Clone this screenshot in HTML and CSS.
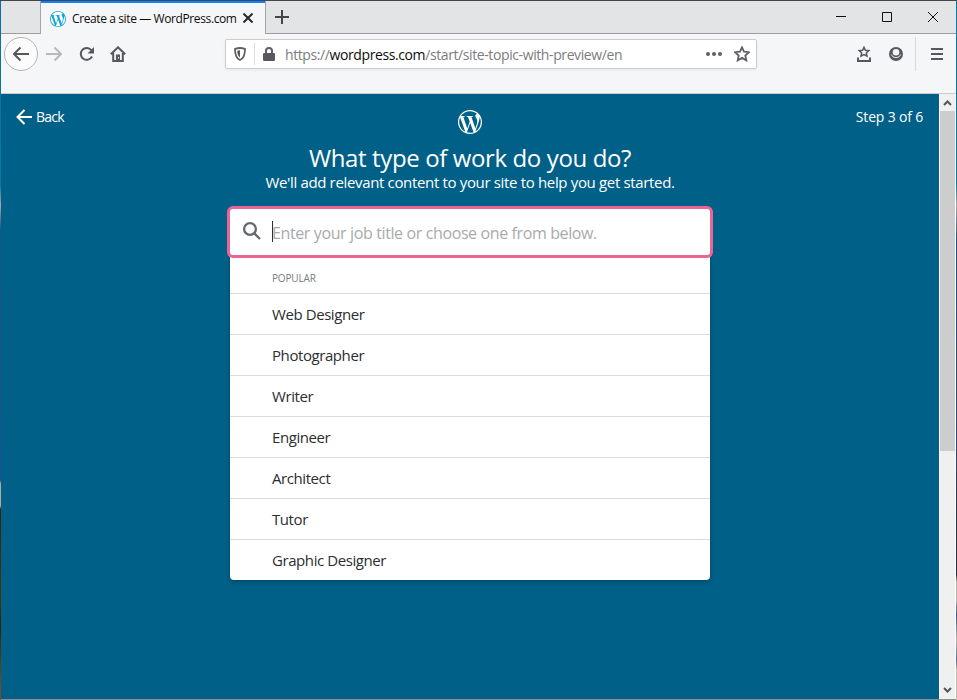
FILE: index.html
```html
<!DOCTYPE html>
<html lang="en">
<head>
<meta charset="utf-8">
<title>Create a site — WordPress.com</title>
<link rel="stylesheet" href="styles.css">
</head>
<body>
<svg class="defs" width="0" height="0">
  <symbol id="wp" viewBox="0 0 24 24"><path d="M21.469 6.825c.84 1.537 1.318 3.3 1.318 5.175 0 3.979-2.156 7.456-5.363 9.325l3.295-9.527c.615-1.54.82-2.771.82-3.864 0-.405-.026-.78-.07-1.11m-7.981.105c.647-.03 1.232-.105 1.232-.105.582-.075.514-.93-.067-.899 0 0-1.755.135-2.88.135-1.064 0-2.85-.15-2.85-.15-.585-.03-.661.855-.075.885 0 0 .54.061 1.125.09l1.68 4.605-2.37 7.08L5.354 6.9c.649-.03 1.234-.1 1.234-.1.585-.075.516-.93-.065-.896 0 0-1.746.138-2.874.138-.2 0-.438-.008-.69-.015C4.911 3.15 8.235 1.215 12 1.215c2.809 0 5.365 1.072 7.286 2.833-.046-.003-.091-.009-.141-.009-1.06 0-1.812.923-1.812 1.914 0 .89.513 1.643 1.06 2.531.411.72.89 1.643.89 2.977 0 .915-.354 1.994-.821 3.479l-1.075 3.585-3.9-11.61.001.014zM12 22.784c-1.059 0-2.081-.153-3.048-.437l3.237-9.406 3.315 9.087c.024.053.05.101.078.149-1.12.393-2.325.609-3.582.609M1.211 12c0-1.564.336-3.05.935-4.39L7.29 21.709C3.694 19.96 1.212 16.271 1.211 12M12 0C5.385 0 0 5.385 0 12s5.385 12 12 12 12-5.385 12-12S18.615 0 12 0"/></symbol>
</svg>
<div class="window">
  <div class="tabbar">
    <div class="tab">
      <svg class="favicon" width="16" height="16"><circle cx="8" cy="8" r="7.8" fill="#fff"/><use href="#wp" width="16" height="16"/></svg>
      <span class="tab-title">Create a site — WordPress.com</span>
      <svg class="tab-close" width="10" height="10" viewBox="0 0 10 10"><path d="M.5.5l9 9M9.500.5l-9 9"/></svg>
    </div>
    <svg class="plus" width="14" height="14" viewBox="0 0 14 14"><path d="M7 0v14M0 7h14"/></svg>
    <div class="caption">
      <svg width="10" height="10" viewBox="0 0 10 10"><path d="M0 4.500h10"/></svg>
      <svg width="10" height="10" viewBox="0 0 10 10"><path d="M.5.5h9v9h-9z"/></svg>
      <svg width="10" height="10" viewBox="0 0 10 10"><path d="M0 0l10 10M10 0L0 10"/></svg>
    </div>
  </div>
  <div class="toolbar">
    <div class="nav">
      <span class="back-circle"><svg width="16" height="16" viewBox="0 0 16 16"><path d="M16 8H1.500M7.500 1.500L1 8l6.500 6.500"/></svg></span>
      <svg class="forward" width="16" height="16" viewBox="0 0 16 16"><path d="M0 8h14.500M8.500 1.500L15 8l-6.500 6.500"/></svg>
      <svg class="reload" width="16" height="16" viewBox="0 0 16 16"><path d="M12.300 4.200A5.900 5.900 0 1 0 13 10.500"/><path class="solid" d="M15 1v6.500H8.500z"/></svg>
      <svg class="home" width="16" height="16" viewBox="0 0 16 16"><path d="M.8 8.300L8 1.300l7.200 7M3.200 7v8h9.600V7"/><path class="solid" fill-rule="evenodd" d="M6 8.500h4V15H6zM8 11v1.500h1V11z"/></svg>
    </div>
    <div class="urlbar">
      <svg class="shield" width="12" height="14" viewBox="0 0 12 14"><path d="M6 1c1.800 0 3.500.4 5 .9C11 7 10.300 11 6 13 1.700 11 1 7 1 1.900 2.500 1.400 4.200 1 6 1z"/><path class="solid" d="M6 3.300v7.200C4 9 3.300 7 3.200 3.800z"/></svg>
      <span class="sep"></span>
      <svg class="lock" width="12" height="14" viewBox="0 0 12 14"><path d="M3 7V4a3 3 0 0 1 6 0v3"/><rect class="solid" y="6" width="12" height="8" rx="1.200"/></svg>
      <span class="url">https://<b>wordpress.com</b>/start/site-topic-with-preview/en</span>
      <svg class="dots" width="16" height="4" viewBox="0 0 16 4"><circle cx="2" cy="2" r="2"/><circle cx="8" cy="2" r="2"/><circle cx="14" cy="2" r="2"/></svg>
      <svg class="star" width="16" height="16" viewBox="0 0 16 16"><path d="M8 1.300l2 4.400 4.900.5-3.600 3.300 1 4.900L8 11.900l-4.300 2.500 1-4.900L1.100 6.200 6 5.700z"/></svg>
    </div>
    <div class="tools">
      <svg width="16" height="16" viewBox="0 0 16 16"><path class="thin" d="M8 1.200l1.400 3 3.400.4-2.500 2.300.7 3.300L8 8.600l-3 1.600.7-3.300-2.500-2.300 3.400-.4z"/><path d="M2 11.500V15h12v-3.500"/></svg>
      <svg width="16" height="16" viewBox="0 0 16 16"><circle class="fill" cx="8" cy="8" r="7"/><circle class="face" cx="8" cy="6.300" r="3.300"/><path class="collar" d="M3.300 8.500Q4.300 11.700 8 11.700T12.700 8.500"/></svg>
      <span class="tool-sep"></span>
      <svg class="menu" width="14" height="14" viewBox="0 0 14 14"><path d="M1 2h12M1 7h12M1 12h12"/></svg>
    </div>
  </div>
  <div class="viewport">
    <main class="page">
      <header class="top">
        <a class="back"><svg width="16" height="16" viewBox="0 0 16 16"><path d="M16 8H2M8.500 1L1.500 8l7 7"/></svg><span>Back</span></a>
        <svg class="logo" width="24" height="24"><use href="#wp" width="24" height="24"/></svg>
        <span class="step">Step 3 of 6</span>
      </header>
      <h1>What type of work do you do?</h1>
      <p class="sub">We'll add relevant content to your site to help you get started.</p>
      <section class="picker">
        <div class="search">
          <svg width="20" height="20" viewBox="0 0 20 20"><circle cx="8" cy="8" r="5.900"/><path d="M12.300 12.300l5.700 5.700"/></svg>
          <span class="caret"></span><span class="placeholder">Enter your job title or choose one from below.</span>
        </div>
        <div class="list">
          <div class="label">POPULAR</div>
          <div class="item">Web Designer</div>
          <div class="item">Photographer</div>
          <div class="item">Writer</div>
          <div class="item">Engineer</div>
          <div class="item">Architect</div>
          <div class="item">Tutor</div>
          <div class="item">Graphic Designer</div>
        </div>
      </section>
    </main>
    <div class="scrollbar">
      <svg width="9" height="6" viewBox="0 0 9 6"><path d="M1 5l3.500-3.500L8 5"/></svg>
      <div class="thumb"></div>
      <svg class="down" width="9" height="6" viewBox="0 0 9 6"><path d="M1 1l3.500 3.500L8 1"/></svg>
    </div>
  </div>
</div>
</body>
</html>
```

FILE: styles.css
```css
* { box-sizing: border-box; }
body {
  margin: 0;
  width: 957px;
  height: 700px;
  overflow: hidden;
  padding: 1px;
  font-family: "Open Sans", "Noto Sans", sans-serif;
  background:
    linear-gradient(#45444a, #45444a) 0 0 / 957px 1px no-repeat,
    linear-gradient(#0c6fa0 0, #0878a8 185px, #a8a5a6 205px, #16568c 230px, #1c4f93 480px, #b5a9a5 484px, #b5a9a5 506px, #3b220f 509px, #50300f 600px, #30220f 625px, #7a4c24 690px) 0 0 / 1px 700px no-repeat,
    linear-gradient(#0878a8 0, #0878a8 185px, #a8a5a6 205px, #1d4f84 240px, #2d4878 430px, #252a38 575px, #b9b5ab 582px, #bab4a8 600px, #36578a 615px, #b8b3aa 640px, #506890 660px, #c2bcb0 670px) 956px 0 / 1px 700px no-repeat,
    #8d9288;
}
svg { display: block; flex: none; fill: none; }
.defs { position: absolute; }
.window { width: 955px; height: 698px; display: flex; flex-direction: column; background: #f5f6f8; }

.tabbar { height: 33px; display: flex; align-items: center; background: #e3e4e6; border-bottom: 1px solid #9c9da0; padding-left: 39px; flex: none; }
.tab { width: 226px; height: 33px; margin-bottom: -1px; display: flex; align-items: center; background: #f5f6f8; border: solid #a5a6a8; border-width: 0 1px; box-shadow: inset 0 2px #0a84ff; padding-left: 9px; }
.favicon { fill: #17a5d5; margin-top: 2px; }
.tab-title { font-size: 12px; line-height: 18px; margin: 3px 0 0 6px; width: 165px; white-space: nowrap; color: #0c0c0d; letter-spacing: -.39px; }
.tab-close { margin: 1px 0 0 6px; stroke: #2a2a2e; stroke-width: 2; }
.plus { margin-left: 9px; stroke: #46464a; stroke-width: 2; }
.caption { margin-left: auto; display: flex; gap: 36px; padding-right: 18px; stroke: #111; stroke-width: 1; }

.toolbar { height: 60px; flex: none; display: flex; align-items: flex-start; border-bottom: 1px solid #ccccce; }
.nav { width: 224px; display: flex; align-items: center; padding: 3px 0 0 3px; stroke: #58585c; stroke-width: 2; }
.back-circle { width: 34px; height: 34px; border: 1px solid #b5b5b8; border-radius: 50%; background: #fcfcfd; display: grid; place-items: center; }
.forward { margin-left: 8px; stroke: #b8b9bb; }
.reload { margin-left: 17px; }
.home { margin-left: 15px; }
.solid { fill: #58585c; stroke: none; }
.urlbar { width: 532px; height: 30px; margin-top: 5px; display: flex; align-items: center; background: #fff; border: 1px solid #ccccce; border-radius: 2px; box-shadow: 0 1px 3px rgba(0,0,0,.06); padding: 0 6px 0 8px; stroke: #606064; }
.shield { stroke-width: 1.800; }
.sep { width: 1px; height: 22px; background: #dcdcde; margin: 0 8px; }
.lock { stroke-width: 2; }
.url { width: 421px; margin-left: 10px; font-size: 14px; line-height: 20px; margin-top: 2px; white-space: nowrap; color: #7c7c80; letter-spacing: -.4px; }
.url b { font-weight: 400; color: #0c0c0d; }
.dots { fill: #606064; stroke: none; }
.star { margin-left: 12px; stroke-width: 1.800; }
.tools { margin-left: auto; display: flex; align-items: center; height: 34px; margin-top: 3px; stroke: #58585c; stroke-width: 2; padding-right: 12px; }
.tools svg + svg { margin-left: 16px; }
.tools .thin { stroke-width: 1.500; }
.fill { fill: #58585c; stroke: none; }
.face { fill: #f5f6f8; stroke: none; }
.collar { stroke: #f5f6f8; stroke-width: .9; }
.tool-sep { width: 1px; height: 34px; background: #d7d7da; margin: 0 14px 0 11px; }

.viewport { flex: 1; display: flex; min-height: 0; }
.page { width: 938px; background: #016087; color: #fff; }
.top { height: 47px; display: flex; justify-content: space-between; align-items: flex-start; padding: 14px 16px 0 15px; font-size: 14px; line-height: 18px; white-space: nowrap; }
.back { width: 150px; display: flex; gap: 4px; letter-spacing: -.8px; }
.back svg { stroke: #fff; stroke-width: 2; margin-top: 1px; }
.logo { fill: #fff; margin-top: 2px; }
.step { width: 150px; text-align: right; letter-spacing: -.18px; }
h1 { margin: 0; font-size: 24px; font-weight: 400; line-height: 34px; text-align: center; letter-spacing: -.38px; }
.sub { margin: -3px 0 0; font-size: 15px; line-height: 20px; text-align: center; letter-spacing: -.34px; }
.picker { width: 480px; margin: 17px auto 0; color: #2b2d2f; }
.search { height: 46px; display: flex; align-items: center; padding-left: 12px; background: #fff; border-radius: 3px; box-shadow: 0 0 0 3px #eb6594; position: relative; }
.search svg { stroke: #646970; stroke-width: 2.300; margin-top: -2px; }
.caret { width: 1px; height: 21px; margin: -1px 0 0 10px; background: #2b2d2f; }
.placeholder { font-size: 16px; line-height: 22px; margin: 1px 0 0 -1px; color: #a7aaad; white-space: nowrap; letter-spacing: -.38px; }
.list { background: #fff; border-radius: 0 0 4px 4px; box-shadow: 0 2px 4px rgba(0,0,0,.25); }
.label { height: 38px; padding: 16px 42px 0; font-size: 10px; line-height: 14px; color: #787c82; letter-spacing: -.15px; }
.item { height: 41px; border-top: 1px solid #dcdcde; padding: 0 42px; font-size: 15px; line-height: 40px; letter-spacing: -.42px; }

.scrollbar { width: 17px; border: solid #fff; border-width: 0 1px 0 1px; background: #f0f0f0; display: flex; flex-direction: column; align-items: center; padding: 6px 0; stroke: #555; stroke-width: 2; }
.thumb { width: 15px; height: 340px; background: #cdcdcd; margin-top: 5px; }
.down { margin-top: auto; }
```
